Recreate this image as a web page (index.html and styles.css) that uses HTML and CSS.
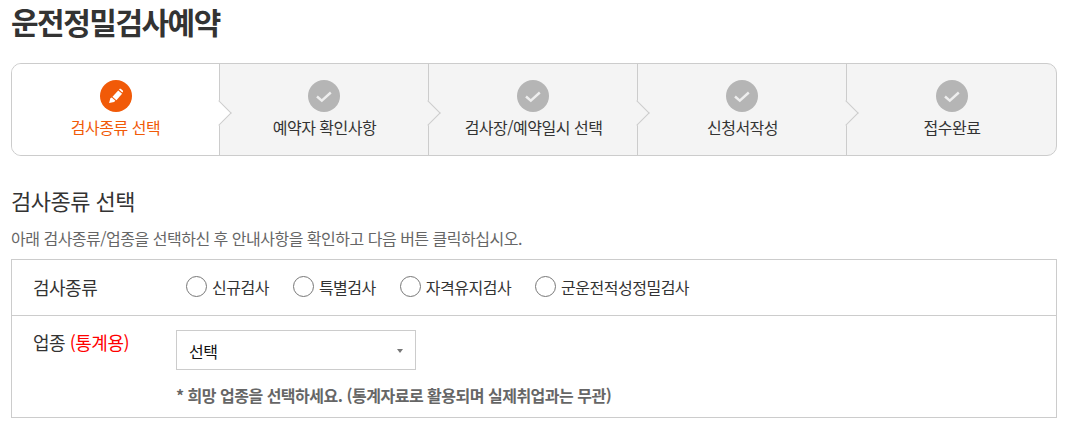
FILE: index.html
```html
<!DOCTYPE html>
<html lang="ko">

<head>
    <meta charset="UTF-8">
    <meta name="viewport" content="width=device-width, initial-scale=1.0">
    <title>운전정밀검사예약</title>
    <link rel="stylesheet" href="styles.css">
</head>

<body>
    <div class="main">
        <h1 class="title">운전정밀검사예약</h1>

        <ul class="steps">
            <li class="step on">
                <span class="step-icon">
                    <svg viewBox="0 0 32 32" width="32" height="32">
                        <path d="M18.2 10.4l3.9 3.4-5.7 6.4-3.9-3.4z" fill="#fff" />
                        <path d="M11.8 17.6l3.6 3.1-1.3 1.3-5 1 1.2-4.8z" fill="#fff" />
                        <path d="M19 9.5l.5-.5c.4-.4 1-.5 1.5-.1l1.7 1.5c.5.4.5 1 .1 1.5l-.5.6z" fill="#fff" />
                    </svg>
                </span>
                <span class="step-name">검사종류 선택</span>
            </li>
            <li class="step">
                <span class="step-icon">
                    <svg viewBox="0 0 32 32" width="32" height="32">
                        <path d="M9 16.5l4.8 4.2 9-8.2" fill="none" stroke="#eee" stroke-width="2.4" />
                    </svg>
                </span>
                <span class="step-name">예약자 확인사항</span>
            </li>
            <li class="step">
                <span class="step-icon">
                    <svg viewBox="0 0 32 32" width="32" height="32">
                        <path d="M9 16.5l4.8 4.2 9-8.2" fill="none" stroke="#eee" stroke-width="2.4" />
                    </svg>
                </span>
                <span class="step-name">검사장/예약일시 선택</span>
            </li>
            <li class="step">
                <span class="step-icon">
                    <svg viewBox="0 0 32 32" width="32" height="32">
                        <path d="M9 16.5l4.8 4.2 9-8.2" fill="none" stroke="#eee" stroke-width="2.4" />
                    </svg>
                </span>
                <span class="step-name">신청서작성</span>
            </li>
            <li class="step">
                <span class="step-icon">
                    <svg viewBox="0 0 32 32" width="32" height="32">
                        <path d="M9 16.5l4.8 4.2 9-8.2" fill="none" stroke="#eee" stroke-width="2.4" />
                    </svg>
                </span>
                <span class="step-name">접수완료</span>
            </li>
        </ul>

        <h2 class="section-title">검사종류 선택</h2>
        <p class="section-desc">아래 검사종류/업종을 선택하신 후 안내사항을 확인하고 다음 버튼 클릭하십시오.</p>

        <div class="form">
            <div class="row row-type">
                <div class="label">검사종류</div>
                <div class="radios">
                    <label class="radio"><span class="circle"></span>신규검사</label>
                    <label class="radio"><span class="circle"></span>특별검사</label>
                    <label class="radio"><span class="circle"></span>자격유지검사</label>
                    <label class="radio"><span class="circle"></span>군운전적성정밀검사</label>
                </div>
            </div>
            <div class="row row-job">
                <div class="label">업종 <span class="red">(통계용)</span></div>
                <div class="field">
                    <div class="select">선택<span class="caret"></span></div>
                    <p class="note">* 희망 업종을 선택하세요. (통계자료로 활용되며 실제취업과는 무관)</p>
                </div>
            </div>
        </div>
    </div>
</body>

</html>
```

FILE: styles.css
```css
* {
    box-sizing: border-box;
    margin: 0;
    padding: 0;
}

body {
    background-color: white;
    color: #333;
    font-family: "Noto Sans CJK KR", "Noto Sans", sans-serif;
    letter-spacing: -0.5px;
    overflow: hidden;
}

.main {
    width: 1046px;
    margin-left: 11px;
}

.title {
    font-size: 30px;
    font-weight: 700;
    line-height: 42px;
    letter-spacing: -1.5px;
    margin-bottom: 21px;
}

.steps {
    display: flex;
    height: 93px;
    list-style: none;
    border: 1px solid #ccc;
    border-radius: 10px;
    background-color: #f4f4f4;
    margin-bottom: 29px;
}

.step {
    position: relative;
    width: 209px;
    display: flex;
    flex-direction: column;
    align-items: center;
    padding-top: 16px;
    border-right: 1px solid #ccc;
}

.step:last-child {
    border-right: 0;
    flex: 1;
}

.step:not(:last-child)::after {
    content: "";
    position: absolute;
    right: -9px;
    top: 40px;
    width: 17px;
    height: 17px;
    background-color: #f4f4f4;
    border-top: 1px solid #ccc;
    border-right: 1px solid #ccc;
    transform: rotate(45deg);
}

.step.on {
    width: 208px;
    background-color: white;
    border-radius: 9px 0 0 9px;
}

.step.on::after {
    background-color: white;
}

.step-icon {
    width: 32px;
    height: 32px;
    border-radius: 50%;
    background-color: #b5b5b5;
    display: block;
}

.step.on .step-icon {
    background-color: #f15a08;
}

.step-icon svg {
    display: block;
}

.step-name {
    font-size: 16px;
    line-height: 20px;
    margin-top: 5px;
    padding-left: 1px;
}

.step.on .step-name {
    color: #f15a08;
    padding-left: 0;
}

.section-title {
    font-size: 22px;
    font-weight: 400;
    line-height: 30px;
    margin-bottom: 13px;
}

.section-desc {
    font-size: 16px;
    line-height: 20px;
    color: #666;
    margin-bottom: 11px;
}

.form {
    border: 1px solid #ccc;
}

.row {
    display: flex;
    padding-left: 21px;
}

.row-type {
    height: 56px;
    align-items: center;
    padding-bottom: 2px;
    border-bottom: 1px solid #ccc;
}

.row-job {
    height: 101px;
    padding-top: 13px;
}

.label {
    width: 143px;
    font-size: 18px;
    line-height: 26px;
}

.red {
    color: red;
}

.radios {
    display: flex;
    gap: 24px;
    padding-left: 10px;
}

.radio {
    display: flex;
    align-items: center;
    font-size: 16px;
    line-height: 20px;
}

.circle {
    width: 21px;
    height: 21px;
    border: 1px solid #777;
    border-radius: 50%;
    background-color: white;
    margin-right: 5px;
}

.field {
    padding-top: 1px;
}

.select {
    position: relative;
    width: 240px;
    height: 40px;
    border: 1px solid #ccc;
    font-size: 16px;
    line-height: 40px;
    color: #111;
    padding-left: 12px;
}

.caret {
    position: absolute;
    right: 12px;
    top: 18px;
    border-top: 4px solid #777;
    border-left: 3px solid transparent;
    border-right: 3px solid transparent;
}

.note {
    font-size: 16px;
    font-weight: 700;
    line-height: 20px;
    color: #666;
    margin-top: 15px;
}
```
